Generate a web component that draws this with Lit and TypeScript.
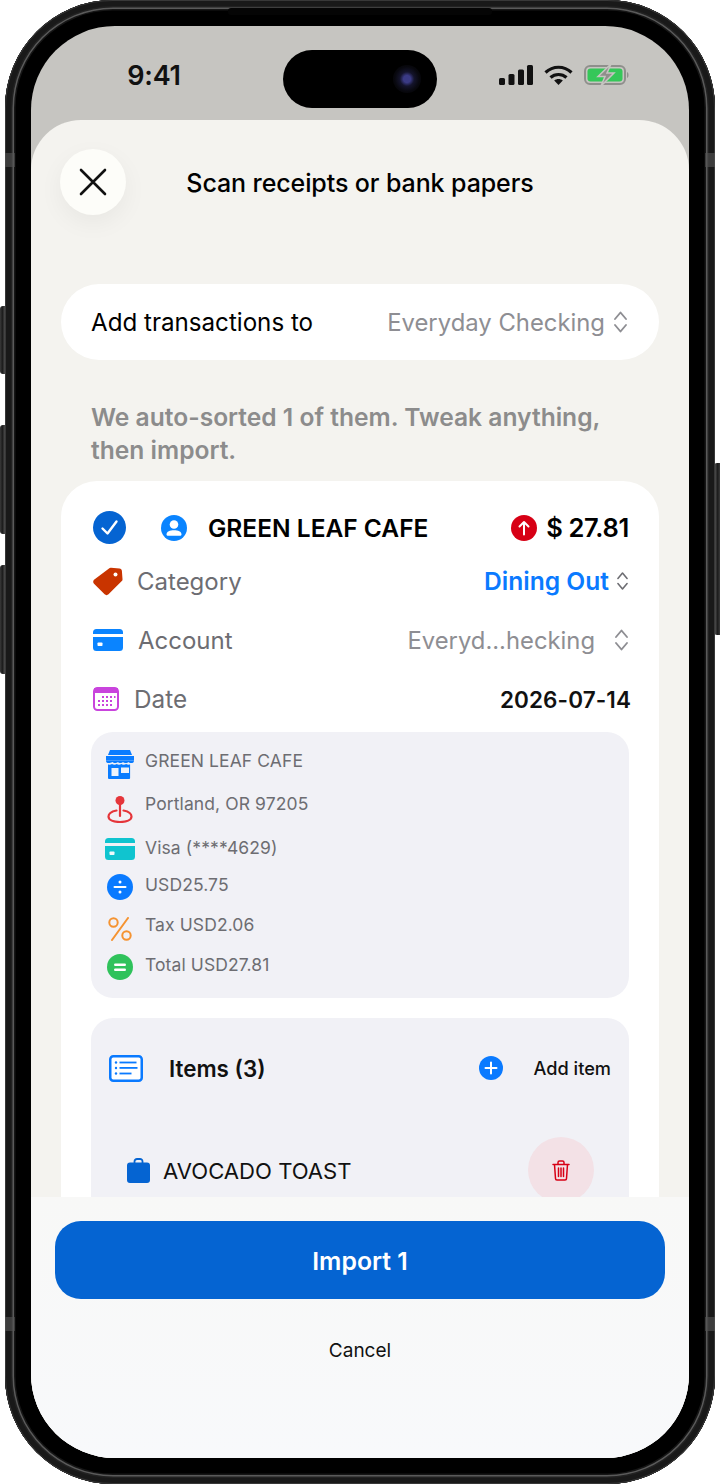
import { LitElement, html, css, svg } from "lit";
import { customElement } from "lit/decorators.js";

const chev = (w: number, h: number, color: string) => html`<svg class="chev" width=${w} height=${h} viewBox="0 0 14 24" fill="none" stroke=${color} stroke-width="1.9" stroke-linecap="round" stroke-linejoin="round"><path d="M1.5 9 7 2.5 12.5 9M1.5 15 7 21.5 12.5 15"/></svg>`;

const icons = {
  store: svg`<svg width="28" height="29" viewBox="0 0 28 29"><path fill="#0a7cff" d="M4 0h20l2 5H2z"/><rect x="0" y="6" width="28" height="4.5" fill="#0a7cff"/><path fill="#0a7cff" d="M0 10.5h28c0 2.4-2 2.6-3 2.6s-2-.6-2.6-1.2c-.6.7-1.5 1.2-2.6 1.2s-2.100-.6-2.800-1.200c-.7.7-1.600 1.200-2.600 1.200s-1.900-.6-2.500-1.200c-.7.7-1.700 1.200-2.800 1.200s-2-.6-2.500-1.200C4.900 12.500 4 13.100 3 13.100s-3-.2-3-2.600z"/><path fill="#0a7cff" d="M2 14.500c1 .3 3 .2 4-.4 1.400.8 3.500.8 4.800 0 1.200.8 3.200.8 4.500 0 1.400.8 3.500.8 4.800 0 1 .6 3 .7 4 .4V28a1 1 0 0 1-1 1H3a1 1 0 0 1-1-1z"/><rect x="5.500" y="18" width="7" height="8" fill="#eef3fb"/><rect x="15" y="17.500" width="8" height="5.500" fill="#eef3fb"/></svg>`,
  pin: svg`<svg width="26" height="27" viewBox="0 0 26 27" fill="none"><circle cx="13" cy="4.500" r="4.500" fill="#e5353a"/><path d="M13 8v12" stroke="#e5353a" stroke-width="2.200" stroke-linecap="round"/><path d="M9.500 14.500C4.500 15.500 1.500 17.500 1.500 20.500c0 3.500 5 5.500 11.500 5.500s11.500-2 11.500-5.500c0-3-3-5-8-6" stroke="#e5353a" stroke-width="2.200" stroke-linecap="round"/></svg>`,
  card: svg`<svg width="30" height="22" viewBox="0 0 30 22"><path fill="#10c4cf" d="M3.500 0h23A3.500 3.500 0 0 1 30 3.500V5H0V3.500A3.500 3.500 0 0 1 3.500 0zM0 8h30v10.500a3.500 3.500 0 0 1-3.500 3.500h-23A3.500 3.500 0 0 1 0 18.500z"/><rect x="4.500" y="13.500" width="5" height="3.500" rx=".8" fill="#eefafb"/></svg>`,
  div: svg`<svg width="26" height="26" viewBox="0 0 26 26"><circle cx="13" cy="13" r="13" fill="#0a7aff"/><circle cx="13" cy="8" r="1.500" fill="#fff"/><circle cx="13" cy="18" r="1.500" fill="#fff"/><rect x="6.500" y="12" width="13" height="2" rx="1" fill="#fff"/></svg>`,
  pct: svg`<svg width="24" height="24" viewBox="0 0 24 24" fill="none" stroke="#f59331" stroke-width="2"><circle cx="5.500" cy="5.500" r="4.200"/><circle cx="18.500" cy="18.500" r="4.200"/><path d="M20 1 4 23" stroke-linecap="round"/></svg>`,
  eq: svg`<svg width="26" height="26" viewBox="0 0 26 26"><circle cx="13" cy="13" r="13" fill="#2fc25b"/><rect x="7" y="9.500" width="12" height="2.400" rx="1.200" fill="#fff"/><rect x="7" y="14.500" width="12" height="2.400" rx="1.200" fill="#fff"/></svg>`,
};

const infoRows = [
  { h: 43, top: -1, icon: icons.store, text: "GREEN LEAF CAFE" },
  { h: 44, top: 2, icon: icons.pin, text: "Portland, OR 97205" },
  { h: 37, top: 0, icon: icons.card, text: "Visa (****4629)" },
  { h: 40, top: -1, icon: icons.div, text: "USD25.75" },
  { h: 40, top: 2, icon: icons.pct, text: "Tax USD2.06" },
  { h: 44, top: -1, icon: icons.eq, text: "Total USD27.81" },
];

@customElement("app-root")
export class AppRoot extends LitElement {
  static styles = css`
    :host { display: block; width: 720px; height: 1484px; position: relative; overflow: hidden; background: #fff;
      font-family: Inter, "Liberation Sans", sans-serif; color: #000; -webkit-font-smoothing: antialiased; }
    .btn { position: absolute; width: 6px; background: linear-gradient(90deg, #3a3a3a, #1c1c1c 40%, #555 90%); }
    .btn.l { left: 0; border-radius: 3px 0 0 3px; }
    .btn.r { right: 0; border-radius: 0 3px 3px 0; transform: scaleX(-1); }
    .b1 { top: 306px; height: 68px; } .b2 { top: 425px; height: 109px; } .b3 { top: 565px; height: 109px; } .b4 { top: 463px; height: 172px; }
    .phone { position: relative; margin: 0 5px; height: 1484px; box-sizing: border-box; padding: 26px; border-radius: 108px; background: #000;
      box-shadow: inset 0 0 0 1px #383838, inset 0 0 0 6px #191919, inset 0 0 0 7.500px #222, inset 0 0 0 9px #5a5a5a, inset 0 0 0 10.500px #161616, inset 0 0 4px 12px #000; }
    .band { position: absolute; width: 10px; height: 14px; background: #55555599; }
    .band.a { left: 0; top: 153px; } .band.b { right: 0; top: 153px; } .band.c { left: 0; top: 1317px; } .band.d { right: 0; top: 1317px; }
    .ridge { position: absolute; left: 223px; top: 8px; width: 264px; height: 7px; border-radius: 3px; background: #050505; }
    .screen { position: relative; height: 100%; border-radius: 84px; overflow: hidden; background: #c6c5c1; display: flex; flex-direction: column; }
    .status { display: flex; padding-top: 24px; padding-bottom: 12px; flex: none; }
    .side { width: 252px; flex: none; box-sizing: border-box; display: flex; align-items: center; justify-content: center; padding-bottom: 8px; }
    .side.left { padding-right: 6px; }
    .side.right { padding-left: 2px; }
    .time { font-size: 27px; font-weight: 600; color: #111; letter-spacing: -.2px; }
    .island { width: 154px; height: 58px; flex: none; border-radius: 29px; background: #000; display: flex; align-items: center; justify-content: flex-end; padding-right: 16px; box-sizing: border-box; }
    .lens { width: 28px; height: 28px; border-radius: 50%; background: radial-gradient(circle, #3a3a85 0 18%, #14142c 36%, #08080e 62%, #000 100%); }
    .stat-icons { display: flex; align-items: center; gap: 11px; }
    .sheet { position: relative; flex: 1; min-height: 0; overflow: hidden; background: #f4f3ef; border-radius: 50px 50px 0 0; padding: 30px 30px 0; display: flex; flex-direction: column; }
    .head { display: flex; align-items: center; flex: none; position: relative; height: 66px; justify-content: center; }
    .close { position: absolute; left: -1px; top: -1px; width: 66px; height: 66px; border-radius: 50%; background: #fdfdf9; display: flex; align-items: center; justify-content: center; box-shadow: 0 8px 24px rgba(0,0,0,.05); }
    .title { font-size: 25px; font-weight: 500; letter-spacing: -.1px; padding-bottom: 1px; }
    .picker { flex: none; margin-top: 68px; height: 76px; border-radius: 38px; background: #fff; display: flex; align-items: center; justify-content: space-between; padding: 0 31px 0 30px; font-size: 24.150px; }
    .picker .v { display: flex; align-items: center; gap: 8px; color: #8e8e93; font-size: 23.850px; }
    .note { flex: none; margin: 41px 0 0; font-size: 24.600px; line-height: 33px; font-weight: 600; color: #8c8c8c; padding: 0 30px; height: 80px; }
    .card { flex: none; background: #fff; border-radius: 36px; padding: 23px 30px 0; }
    .row { display: flex; align-items: center; }
    .r1 { height: 47.500px; }
    .check { margin-left: 2px; } .who { margin-left: 35px; }
    .merchant { font-size: 24.500px; font-weight: 600; margin-left: 21px; flex: 1; }
    .amt { font-size: 25.500px; font-weight: 600; margin-left: 9px; letter-spacing: -.3px; }
    .rr { height: 59px; font-size: 24px; padding-left: 2px; }
    .lbl { color: #6d6d72; flex: 1; }
    .lbl.c { margin-left: 14px; } .lbl.a { margin-left: 15px; } .lbl.d { margin-left: 15px; font-size: 24.300px; }
    .blue { color: #0a7aff; font-weight: 600; margin-right: 7px; font-size: 24.600px; }
    .grey { color: #8e8e93; margin-right: 19px; font-size: 23.800px; }
    .date { font-size: 22.500px; font-weight: 600; color: #111; letter-spacing: .1px; margin-right: -2px; }
    .info { margin-top: 3.500px; background: #f1f1f6; border-radius: 22px; padding: 19px 15px 0; height: 266px; box-sizing: border-box; }
    .irow { display: flex; align-items: flex-start; color: #6d6d72; font-size: 17.500px; line-height: 20px; letter-spacing: .1px; }
    .ic { width: 28px; display: flex; justify-content: center; margin-right: 11px; flex: none; position: relative; }
    .ic svg { flex: none; }
    .items { margin-top: 20px; background: #f1f1f6; border-radius: 22px; height: 320px; }
    .ihead { height: 100px; padding: 0 18px; }
    .ihead .t { font-size: 22.400px; font-weight: 600; margin-left: 26px; flex: 1; color: #111; }
    .add { font-size: 18.200px; font-weight: 500; color: #111; margin-left: 30px; }
    .item { height: 104px; padding: 0 35px 0 36px; }
    .item .n { font-size: 22.100px; margin-left: 13px; flex: 1; color: #111; padding-top: 1px; }
    .trash { width: 66px; height: 66px; border-radius: 50%; background: #f3e1e6; display: flex; align-items: center; justify-content: center; }
    .footer { position: absolute; left: 0; right: 0; bottom: 0; top: 1077px; background: linear-gradient(#f8f8f7, #f8f9fb); padding: 24px 24px 0; display: flex; flex-direction: column; align-items: stretch; }
    .import { height: 78px; border-radius: 26px; background: #0564d2; color: #fff; font-size: 24.800px; font-weight: 600; display: flex; align-items: center; justify-content: center; padding-top: 1px; box-sizing: border-box; }
    .cancel { margin-top: 39px; text-align: center; font-size: 19px; line-height: 26px; color: #111; }
  `;

  render() {
    return html`
      <div class="btn l b1"></div><div class="btn l b2"></div><div class="btn l b3"></div><div class="btn r b4"></div>
      <div class="phone">
        <div class="band a"></div><div class="band b"></div><div class="band c"></div><div class="band d"></div>
        <div class="ridge"></div>
        <div class="screen">
          <div class="status">
            <div class="side left"><span class="time">9:41</span></div>
            <div class="island"><div class="lens"></div></div>
            <div class="side right">
              <div class="stat-icons">
                <svg width="34" height="20" viewBox="0 0 34 20" fill="#111"><rect x="0" y="13" width="6" height="7" rx="1.500"/><rect x="9.500" y="9" width="6" height="11" rx="1.500"/><rect x="19" y="4.500" width="6" height="15.500" rx="1.500"/><rect x="28" y="0" width="6" height="20" rx="1.500"/></svg>
                <svg width="29" height="20" viewBox="0 0 29 20" fill="none" stroke="#111" stroke-width="3.200"><path d="M1.500 7.500C9 .5 20 .5 27.500 7.500"/><path d="M6.500 12.500c4.500-4 11.500-4 16 0"/><path d="M14.500 20l-4.300-4.500c2.500-2 6.100-2 8.600 0z" fill="#111" stroke="none"/></svg>
                <svg width="46" height="22" viewBox="0 0 46 22"><rect x="1" y="2" width="40" height="18" rx="5" fill="none" stroke="#8f8f8c" stroke-width="2"/><rect x="3.500" y="4.500" width="35" height="13" rx="3" fill="#35c759"/><path d="M27 0 14 12.500h7L17 22 30 9h-7z" fill="#8f8f8c" stroke="#c6c5c1" stroke-width="1.500"/><path d="M43 8c2 .5 2 5.500 0 6z" fill="#8f8f8c"/></svg>
              </div>
            </div>
          </div>
          <div class="sheet">
            <div class="head">
              <div class="close"><svg width="28" height="28" viewBox="0 0 28 28" stroke="#111" stroke-width="2.600" stroke-linecap="round"><path d="M2 2l24 24M26 2 2 26"/></svg></div>
              <div class="title">Scan receipts or bank papers</div>
            </div>
            <div class="picker"><span>Add transactions to</span><span class="v">Everyday Checking ${chev(15, 24, "#8e8e93")}</span></div>
            <p class="note">We auto-sorted 1 of them. Tweak anything, then import.</p>
            <div class="card">
              <div class="row r1">
                <svg class="check" width="33" height="33" viewBox="0 0 33 33"><circle cx="16.500" cy="16.500" r="16.500" fill="#0564d2"/><path d="M9.500 17.500l5 5 9-12" fill="none" stroke="#fff" stroke-width="2.400" stroke-linecap="round" stroke-linejoin="round"/></svg>
                <svg class="who" width="26" height="26" viewBox="0 0 26 26"><circle cx="13" cy="13" r="13" fill="#0a84ff"/><circle cx="13" cy="9.500" r="4.300" fill="#fff"/><path d="M5.500 19.500c0-3 3.500-4.300 7.500-4.300s7.500 1.300 7.500 4.300c0 1-.8 1.300-1.500 1.300H7c-.7 0-1.500-.3-1.500-1.300z" fill="#fff"/></svg>
                <span class="merchant">GREEN LEAF CAFE</span>
                <svg width="26" height="26" viewBox="0 0 26 26"><circle cx="13" cy="13" r="13" fill="#d70015"/><path d="M13 19.500V7M8.500 11.500 13 7l4.500 4.500" fill="none" stroke="#fff" stroke-width="2" stroke-linecap="round" stroke-linejoin="round"/></svg>
                <span class="amt">$ 27.81</span>
              </div>
              <div class="row rr">
                <svg width="30" height="29" viewBox="0 0 30 29"><path fill="#c93400" d="M18 .8 26.500 1.500c1.300.1 2.300 1.100 2.400 2.400l.6 8.200c.1.800-.2 1.500-.7 2L15.500 27.300c-1.100 1.100-2.800 1.100-3.900 0L1 16.700c-1.100-1.100-1.100-2.800 0-3.900L16 1.500c.5-.5 1.200-.8 2-.7z"/><circle cx="22.500" cy="7.500" r="2" fill="#fff"/></svg>
                <span class="lbl c">Category</span>
                <span class="blue">Dining Out</span>${chev(13, 20, "#6d6d72")}
              </div>
              <div class="row rr">
                <svg width="30" height="22" viewBox="0 0 30 22"><path fill="#0a84ff" d="M3.500 0h23A3.500 3.500 0 0 1 30 3.500V5H0V3.500A3.500 3.500 0 0 1 3.500 0zM0 8h30v10.500a3.500 3.500 0 0 1-3.500 3.500h-23A3.500 3.500 0 0 1 0 18.500z"/><rect x="4.500" y="13.500" width="5" height="3.500" rx=".8" fill="#fff"/></svg>
                <span class="lbl a">Account</span>
                <span class="grey">Everyd...hecking</span>${chev(15, 24, "#8e8e93")}
              </div>
              <div class="row rr">
                <svg width="26" height="24" viewBox="0 0 26 24"><rect x="1" y="1" width="24" height="22" rx="3.500" fill="#fff" stroke="#c944dd" stroke-width="2"/><rect x="1" y="1" width="24" height="5" fill="#c944dd"/><g fill="#c944dd"><rect x="9" y="9" width="2" height="2"/><rect x="13" y="9" width="2" height="2"/><rect x="17" y="9" width="2" height="2"/><rect x="21" y="9" width="1.500" height="2"/><rect x="5" y="13" width="2" height="2"/><rect x="9" y="13" width="2" height="2"/><rect x="13" y="13" width="2" height="2"/><rect x="17" y="13" width="2" height="2"/><rect x="5" y="17" width="2" height="2"/><rect x="9" y="17" width="2" height="2"/><rect x="13" y="17" width="2" height="2"/><rect x="17" y="17" width="2" height="2"/></g></svg>
                <span class="lbl d">Date</span>
                <span class="date">2026-07-14</span>
              </div>
              <div class="info">
                ${infoRows.map(r => html`<div class="irow" style="height:${r.h}px"><span class="ic" style="top:${r.top}px">${r.icon}</span><span>${r.text}</span></div>`)}
              </div>
              <div class="items">
                <div class="row ihead">
                  <svg width="34" height="27" viewBox="0 0 34 27" fill="none"><rect x="1.250" y="1.250" width="31.500" height="24.500" rx="3" stroke="#0a7aff" stroke-width="2.500" fill="#fff"/><g fill="#0a7aff"><circle cx="7" cy="7.500" r="1.200"/><circle cx="7" cy="13" r="1.200"/><circle cx="7" cy="18.500" r="1.200"/><rect x="10.500" y="6.600" width="17" height="1.800"/><rect x="10.500" y="12" width="18" height="1.800"/><rect x="10.500" y="17.600" width="12" height="1.800"/></g></svg>
                  <span class="t">Items (3)</span>
                  <svg width="24" height="24" viewBox="0 0 24 24"><circle cx="12" cy="12" r="12" fill="#0a7aff"/><path d="M12 6.500v11M6.500 12h11" stroke="#fff" stroke-width="2" stroke-linecap="round"/></svg>
                  <span class="add">Add item</span>
                </div>
                <div class="row item">
                  <svg width="23" height="25" viewBox="0 0 23 25"><path d="M7.500 5V3.500A2.500 2.500 0 0 1 10 1h3a2.500 2.500 0 0 1 2.500 2.500V5" fill="none" stroke="#0564d2" stroke-width="1.800"/><path d="M3 4.500h17a3 3 0 0 1 3 3V22a3 3 0 0 1-3 3H3a3 3 0 0 1-3-3V7.500a3 3 0 0 1 3-3z" fill="#0564d2"/></svg>
                  <span class="n">AVOCADO TOAST</span>
                  <div class="trash"><svg width="18" height="21" viewBox="0 0 18 21" fill="none" stroke="#d70015" stroke-width="1.500" stroke-linecap="round"><path d="M1 4.500h16M6 4.500V2.500a1.500 1.500 0 0 1 1.500-1.500h3A1.500 1.500 0 0 1 12 2.500v2M2.500 4.500l1 14a1.500 1.500 0 0 0 1.500 1.500h8a1.500 1.500 0 0 0 1.500-1.500l1-14M6.500 8v8.500M9 8v8.500M11.500 8v8.500"/></svg></div>
                </div>
              </div>
            </div>
            <div class="footer">
              <div class="import">Import 1</div>
              <div class="cancel">Cancel</div>
            </div>
          </div>
        </div>
      </div>
    `;
  }
}
